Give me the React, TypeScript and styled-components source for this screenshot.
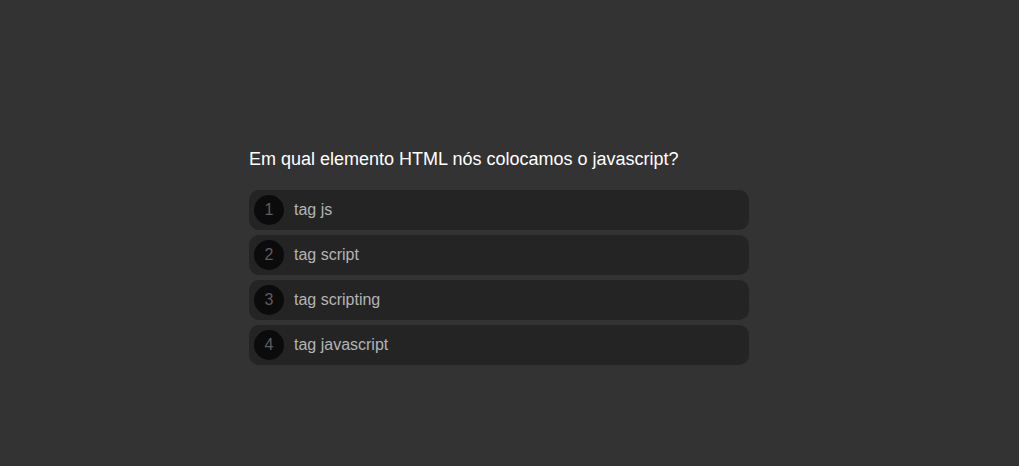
import React from "react";
import styled, { createGlobalStyle } from "styled-components";

const Global = createGlobalStyle`
  html, body { margin: 0; padding: 0; background: #333333; }
  body { font-family: "Liberation Sans", Arial, sans-serif; }
`;

const Page = styled.div`
  width: 1019px;
  height: 466px;
  display: flex;
  justify-content: center;
  padding-top: 147px;
  padding-right: 21px;
  box-sizing: border-box;
`;

const Quiz = styled.div`
  width: 500px;
  display: flex;
  flex-direction: column;
`;

const Question = styled.h2`
  margin: 0 0 19px 0;
  font-size: 18px;
  line-height: 24px;
  font-weight: normal;
  color: #ffffff;
`;

const Options = styled.div`
  display: flex;
  flex-direction: column;
  gap: 5px;
`;

const Option = styled.div`
  height: 40px;
  background: #242424;
  border-radius: 10px;
  display: flex;
  align-items: center;
  padding-left: 5px;
  gap: 10px;
`;

const Num = styled.span`
  width: 30px;
  height: 30px;
  border-radius: 50%;
  background: #0b0b0b;
  color: #5e5e5e;
  font-size: 16px;
  display: flex;
  align-items: center;
  justify-content: center;
`;

const Label = styled.span`
  color: #b4b4b4;
  font-size: 16px;
`;

const options = ["tag js", "tag script", "tag scripting", "tag javascript"];

export default function App() {
  return (
    <>
      <Global />
      <Page>
        <Quiz>
          <Question>Em qual elemento HTML nós colocamos o javascript?</Question>
          <Options>
            {options.map((o, i) => (
              <Option key={o}>
                <Num>{i + 1}</Num>
                <Label>{o}</Label>
              </Option>
            ))}
          </Options>
        </Quiz>
      </Page>
    </>
  );
}
